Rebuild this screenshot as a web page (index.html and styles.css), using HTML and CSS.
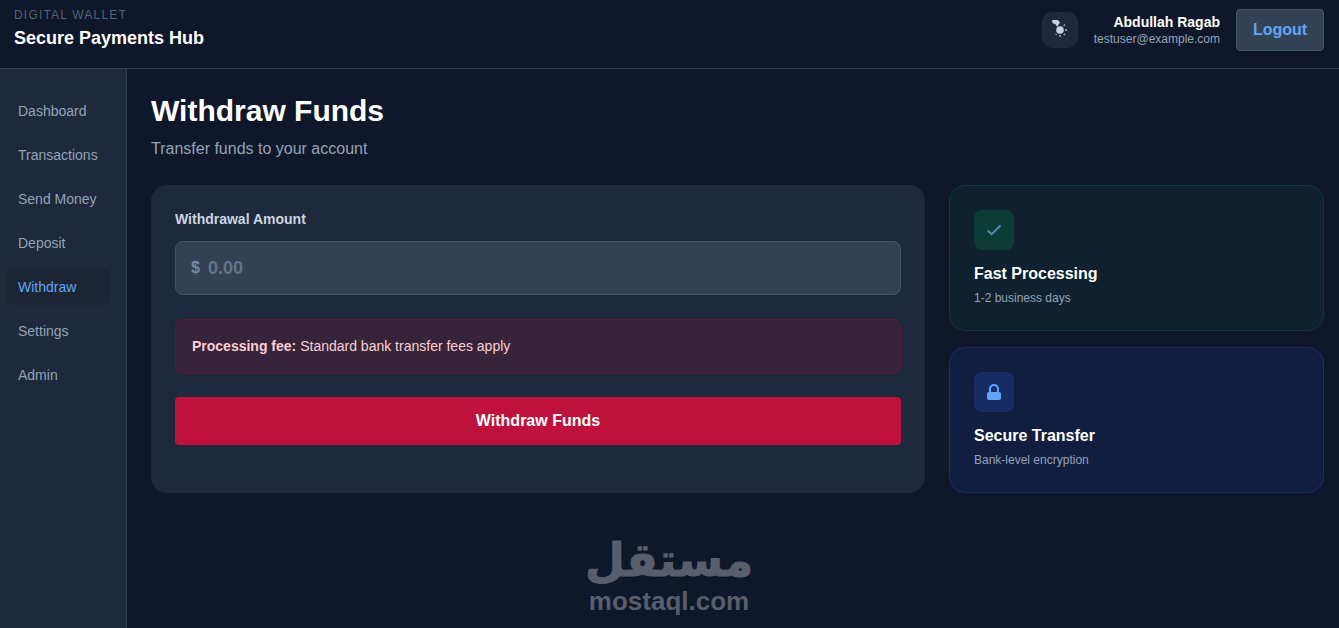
FILE: index.html
```html
<!DOCTYPE html>
<html lang="en">
<head>
    <meta charset="UTF-8">
    <title>Withdraw Funds</title>
    <link rel="stylesheet" href="styles.css">
</head>
<body>
    <header class="topbar">
        <div class="brand">
            <div class="brand-kicker">DIGITAL WALLET</div>
            <div class="brand-name">Secure Payments Hub</div>
        </div>
        <div class="topbar-right">
            <button class="theme-btn" aria-label="Toggle theme">
                <svg width="20" height="20" viewBox="0 0 20 20">
                    <path d="M2.300 0h5.700l2 2.500-3 4.500-1.200-2.500-3.500-1.500z" fill="#cbd5e1"/>
                    <circle cx="10" cy="10" r="3.800" fill="#cbd5e1"/>
                    <path d="M15 10h2M10 15v2M13.700 5.700l1.200-1.200M13.800 13.800l1.200 1.200M6.500 14l-.8.8" stroke="#a3b1c4" stroke-width="1.500"/>
                </svg>
            </button>
            <div class="user">
                <div class="user-name">Abdullah Ragab</div>
                <div class="user-mail">testuser@example.com</div>
            </div>
            <button class="logout">Logout</button>
        </div>
    </header>

    <div class="layout">
        <nav class="sidebar">
            <a class="nav-item">Dashboard</a>
            <a class="nav-item">Transactions</a>
            <a class="nav-item">Send Money</a>
            <a class="nav-item">Deposit</a>
            <a class="nav-item active">Withdraw</a>
            <a class="nav-item">Settings</a>
            <a class="nav-item">Admin</a>
        </nav>

        <main class="content">
            <h1 class="page-title">Withdraw Funds</h1>
            <p class="page-sub">Transfer funds to your account</p>

            <div class="columns">
                <section class="form-card">
                    <label class="field-label" for="amount">Withdrawal Amount</label>
                    <div class="amount-box">
                        <span class="currency">$</span>
                        <input id="amount" class="amount-input" placeholder="0.00">
                    </div>
                    <div class="fee-note"><span><b>Processing fee:</b> Standard bank transfer fees apply</span></div>
                    <button class="submit">Withdraw Funds</button>
                </section>

                <aside class="side-cards">
                    <div class="info-card green">
                        <div class="info-icon">
                            <svg width="16" height="16" viewBox="0 0 16 16" fill="none">
                                <path d="M1.500 8.500l4.200 3.700 8.800-8.700" stroke="#4f8fae" stroke-width="2"/>
                            </svg>
                        </div>
                        <h3 class="info-title">Fast Processing</h3>
                        <p class="info-text">1-2 business days</p>
                    </div>
                    <div class="info-card blue">
                        <div class="info-icon">
                            <svg width="16" height="16" viewBox="0 0 16 16">
                                <path d="M4 9V5a4 4 0 0 1 8 0v4" fill="none" stroke="#60a5fa" stroke-width="2"/>
                                <rect x="1" y="8" width="14" height="8" rx="2" fill="#60a5fa"/>
                            </svg>
                        </div>
                        <h3 class="info-title">Secure Transfer</h3>
                        <p class="info-text">Bank-level encryption</p>
                    </div>
                </aside>
            </div>
        </main>
    </div>

    <div class="watermark">
        <div class="watermark-ar" lang="ar" dir="rtl">مستقل</div>
        <div class="watermark-en">mostaql.com</div>
    </div>
</body>
</html>
```

FILE: styles.css
```css
* {
    box-sizing: border-box;
}

body {
    margin: 0;
    height: 628px;
    overflow: hidden;
    background-color: #0f172a;
    font-family: "Liberation Sans", Arial, sans-serif;
    color: #fff;
}

.topbar {
    height: 69px;
    display: flex;
    justify-content: space-between;
    align-items: center;
    padding: 0 15px 8px 14px;
    border-bottom: 1px solid #334155;
}

.brand {
    margin-bottom: 3px;
}

.brand-kicker {
    font-size: 12px;
    letter-spacing: 1.2px;
    line-height: 13px;
    color: #56637a;
    padding-top: 1px;
    margin-bottom: 5px;
}

.brand-name {
    font-size: 18px;
    font-weight: bold;
    line-height: 22px;
}

.topbar-right {
    display: flex;
    align-items: center;
}

.theme-btn {
    width: 36px;
    height: 36px;
    padding: 0;
    border: 0;
    border-radius: 10px;
    background-color: #1e293b;
    display: flex;
    align-items: center;
    justify-content: center;
    margin-right: 16px;
}

.user {
    text-align: right;
    margin-right: 16px;
}

.user-name {
    font-size: 14px;
    font-weight: bold;
    line-height: 17px;
}

.user-mail {
    font-size: 12px;
    line-height: 16px;
    color: #94a3b8;
}

.logout {
    width: 88px;
    height: 42px;
    border: 1px solid #475569;
    border-radius: 4px;
    background-color: #334155;
    color: #60a5fa;
    font-family: inherit;
    font-size: 16px;
    font-weight: bold;
}

.layout {
    display: flex;
    height: 559px;
}

.sidebar {
    width: 127px;
    flex-shrink: 0;
    background-color: #1e293b;
    border-right: 1px solid #334155;
    padding: 24px 16px 0 6px;
    display: flex;
    flex-direction: column;
    gap: 8px;
}

.nav-item {
    display: block;
    height: 36px;
    line-height: 36px;
    padding-left: 12px;
    font-size: 14px;
    color: #94a3b8;
    border-radius: 6px;
}

.nav-item.active {
    background-color: #1b2534;
    color: #60a5fa;
}

.content {
    flex: 1;
    padding: 24px 15px 0 24px;
}

.page-title {
    margin: 0;
    font-size: 30px;
    line-height: 36px;
}

.page-sub {
    margin: 8px 0 0;
    font-size: 16px;
    line-height: 24px;
    color: #94a3b8;
}

.columns {
    display: grid;
    grid-template-columns: 774px 1fr;
    gap: 24px;
    margin-top: 24px;
}

.form-card {
    height: 308px;
    padding: 24px 24px 48px;
    background-color: #1e293b;
    border-radius: 16px;
}

.field-label {
    display: block;
    font-size: 14px;
    font-weight: bold;
    line-height: 20px;
    color: #cbd5e1;
    margin-bottom: 12px;
}

.amount-box {
    height: 54px;
    display: flex;
    align-items: center;
    padding: 0 15px;
    background-color: #334155;
    border: 1px solid #475569;
    border-radius: 8px;
    font-size: 16px;
    font-weight: bold;
}

.currency {
    color: #748aa6;
    margin-right: 8px;
}

.amount-input {
    flex: 1;
    border: 0;
    padding: 0;
    outline: 0;
    background: transparent;
    font-family: inherit;
    font-size: 18px;
    font-weight: bold;
    color: #fff;
}

.amount-input::placeholder {
    color: #64748b;
    opacity: 1;
}

.fee-note {
    height: 55px;
    margin-top: 24px;
    padding: 0 16px 2px;
    display: flex;
    align-items: center;
    background-color: #36253a;
    border: 1px solid #5f1a35;
    border-radius: 8px;
    font-size: 14px;
    color: #fecdd3;
}

.submit {
    display: block;
    width: 100%;
    height: 48px;
    margin-top: 23px;
    border: 0;
    border-radius: 4px;
    background-color: #be123c;
    color: #fff;
    font-family: inherit;
    font-size: 16px;
    font-weight: bold;
}

.side-cards {
    display: flex;
    flex-direction: column;
    gap: 16px;
}

.info-card {
    height: 146px;
    padding: 24px;
    border-radius: 16px;
    border: 1px solid;
}

.info-card.green {
    background-color: #0f212e;
    border-color: #0f3a3a;
}

.info-card.blue {
    background-color: #111e3f;
    border-color: #1a2f66;
}

.info-icon {
    width: 40px;
    height: 40px;
    border-radius: 8px;
    display: flex;
    align-items: center;
    justify-content: center;
}

.green .info-icon {
    background-color: #0d3b36;
}

.blue .info-icon {
    background-color: #172c63;
}

.info-title {
    margin: 14px 0 0;
    font-size: 16px;
    line-height: 20px;
}

.info-text {
    margin: 6px 0 0;
    font-size: 12px;
    line-height: 16px;
    color: #94a3b8;
}

.watermark {
    position: absolute;
    left: 569px;
    top: 532px;
    width: 200px;
    text-align: center;
    color: #585e6b;
    font-weight: bold;
}

.watermark-ar {
    font-family: "DejaVu Sans", sans-serif;
    font-size: 46px;
    line-height: 56px;
    -webkit-text-stroke: 1px #585e6b;
}

.watermark-en {
    font-size: 26px;
    line-height: 26px;
}
```
